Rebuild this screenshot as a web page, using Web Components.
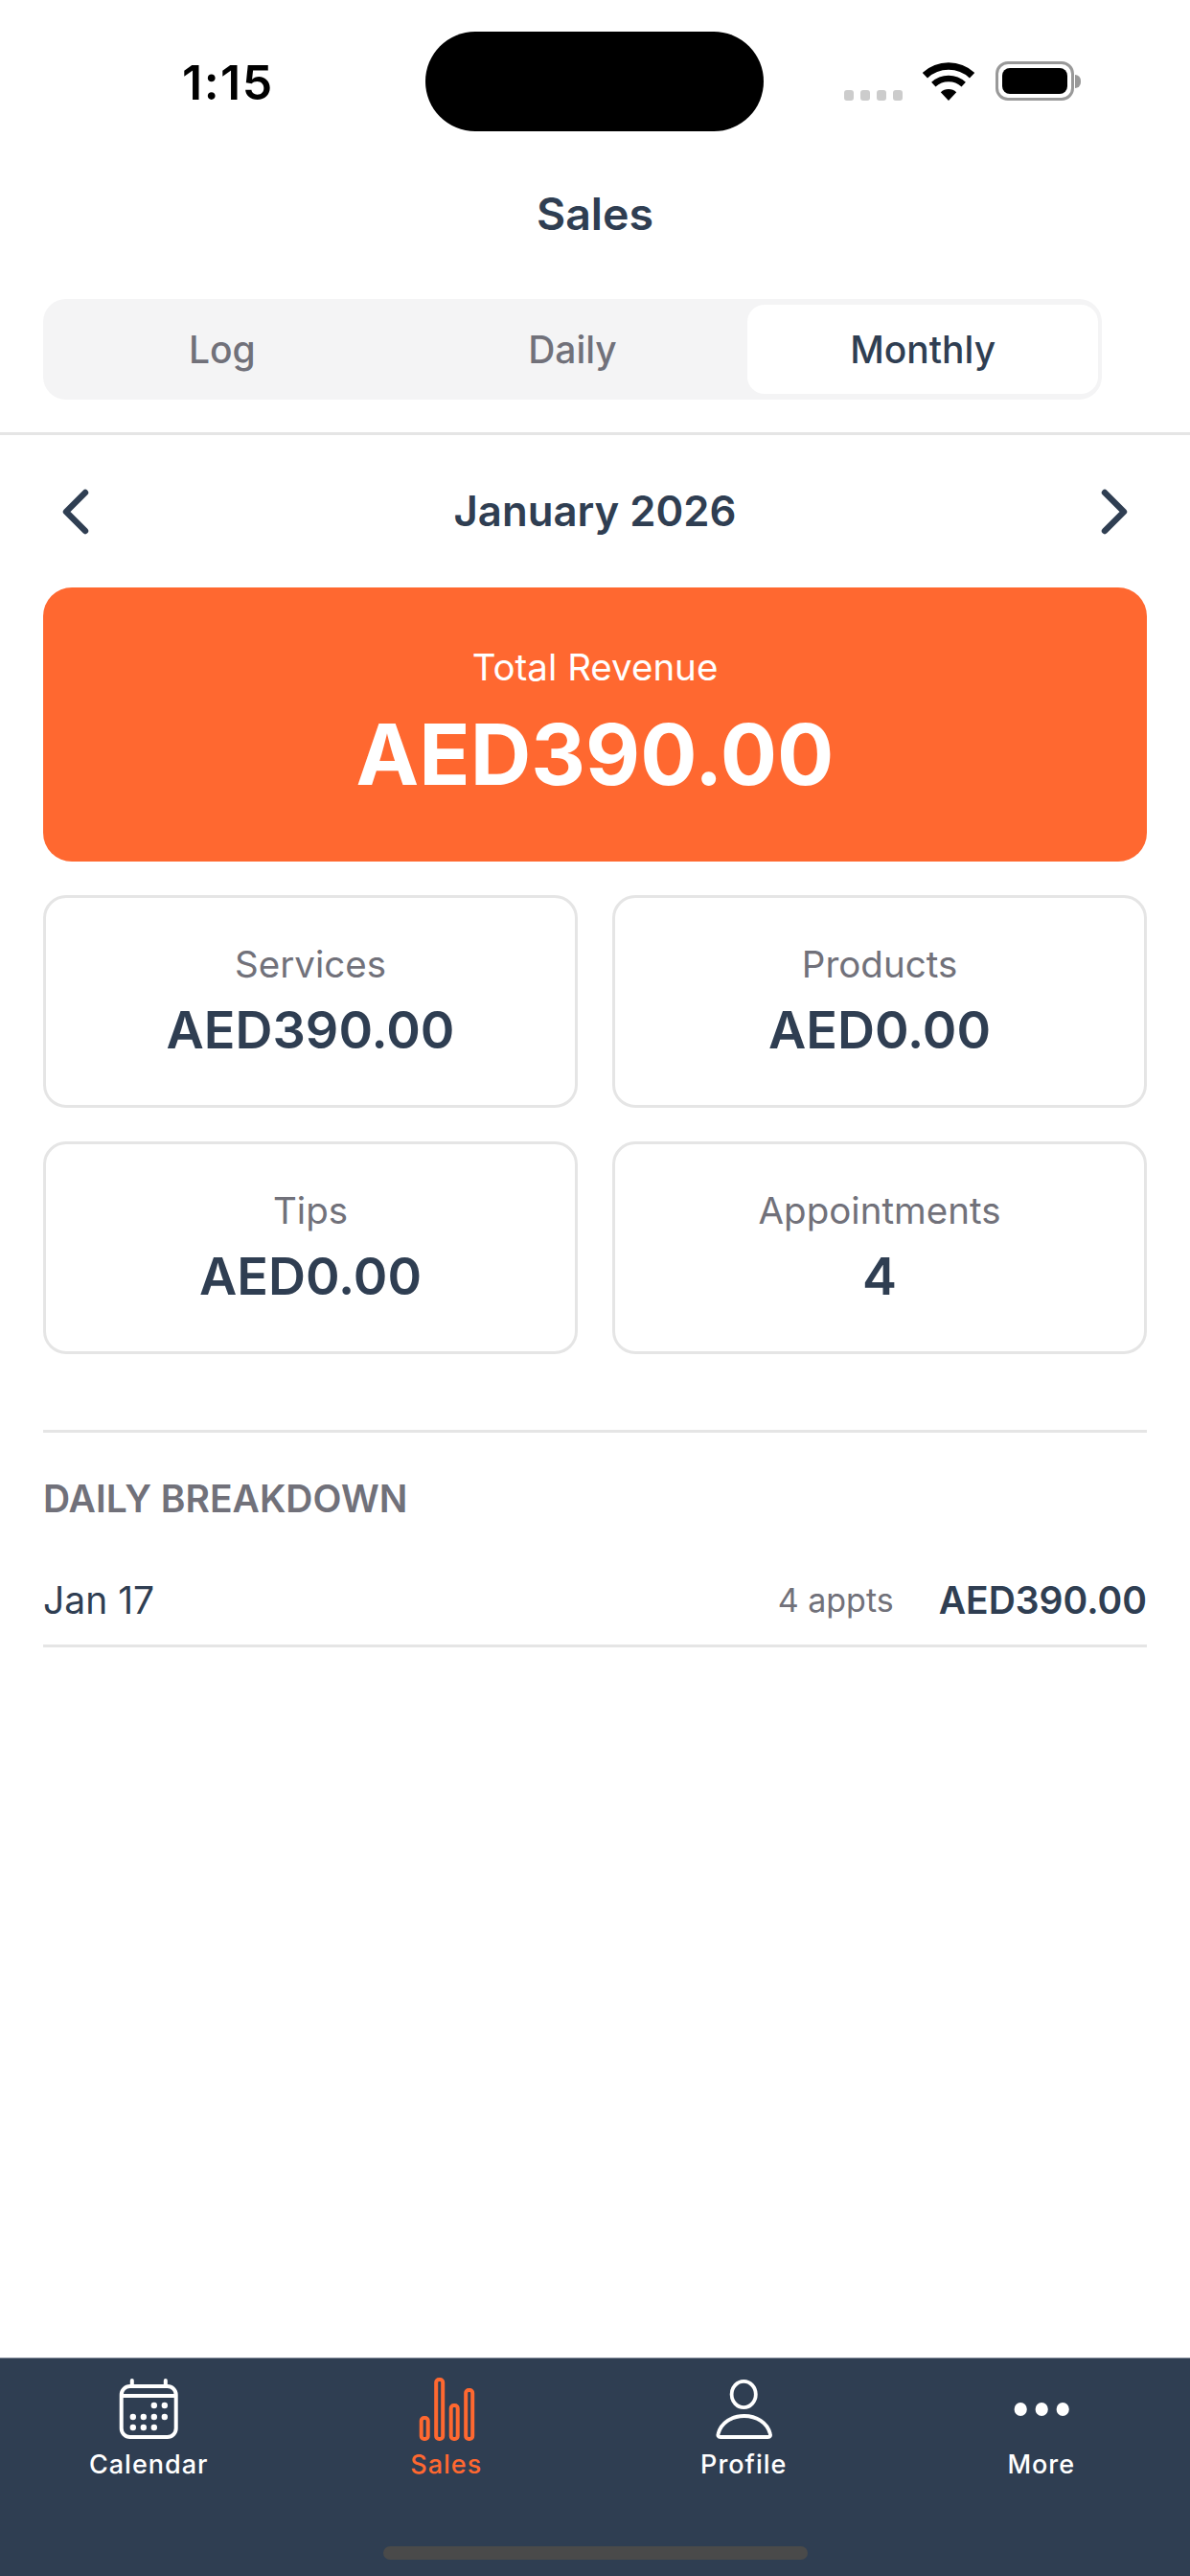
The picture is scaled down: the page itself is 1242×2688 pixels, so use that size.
<!DOCTYPE html>
<html lang="en">
<head>
<meta charset="utf-8">
<title>Sales</title>
<style>
  html, body { margin: 0; padding: 0; background: #fff; }
  body {
    width: 1242px;
    height: 2688px;
    overflow: hidden;
    display: flex;
    flex-direction: column;
    font-family: Inter, "Liberation Sans", sans-serif;
    color: #2f3e52;
  }
</style>
</head>
<body>
  <status-bar time="1:15"></status-bar>
  <sales-header title="Sales">
    <seg-control tabs="Log,Daily,Monthly" active="Monthly"></seg-control>
  </sales-header>
  <month-nav>January 2026</month-nav>
  <sales-summary>
    <revenue-card label="Total Revenue" value="AED390.00"></revenue-card>
    <stat-card label="Services" value="AED390.00"></stat-card>
    <stat-card label="Products" value="AED0.00"></stat-card>
    <stat-card label="Tips" value="AED0.00"></stat-card>
    <stat-card label="Appointments" value="4"></stat-card>
  </sales-summary>
  <daily-breakdown heading="DAILY BREAKDOWN">
    <breakdown-row day="Jan 17" count="4 appts" amount="AED390.00"></breakdown-row>
  </daily-breakdown>
  <tab-bar>
    <tab-item label="Calendar" icon="calendar"></tab-item>
    <tab-item label="Sales" icon="sales" active></tab-item>
    <tab-item label="Profile" icon="profile"></tab-item>
    <tab-item label="More" icon="more"></tab-item>
  </tab-bar>

<script>
const icons = {
  calendar: `<svg width="64" height="66" viewBox="0 0 64 66" fill="none" stroke="currentColor" stroke-width="4">
      <rect x="3.7" y="9" width="57" height="53" rx="9"/>
      <path d="M3.7 19H60.7"/>
      <path d="M14.8 3V9M49.8 3V9" stroke-linecap="round"/>
      <g fill="currentColor" stroke="none">
        <circle cx="37.8" cy="29" r="3.2"/><circle cx="48.8" cy="29" r="3.2"/>
        <circle cx="15.8" cy="41" r="3.2"/><circle cx="26.8" cy="41" r="3.2"/><circle cx="37.8" cy="41" r="3.2"/><circle cx="48.8" cy="41" r="3.2"/>
        <circle cx="15.8" cy="52" r="3.2"/><circle cx="26.8" cy="52" r="3.2"/><circle cx="37.8" cy="52" r="3.2"/>
      </g>
    </svg>`,
  sales: `<svg width="64" height="66" viewBox="0 0 64 66" fill="none" stroke="currentColor" stroke-width="4">
      <rect x="5.7" y="42" width="7" height="22" rx="3"/>
      <rect x="21.2" y="2" width="7" height="62" rx="3"/>
      <rect x="36.7" y="29" width="7" height="35" rx="3"/>
      <rect x="52.2" y="13" width="7" height="51" rx="3"/>
    </svg>`,
  profile: `<svg width="64" height="66" viewBox="0 0 64 66" fill="none" stroke="currentColor" stroke-width="3.8">
      <ellipse cx="32.2" cy="17.5" rx="12.6" ry="13.6"/>
      <path d="M8 62C5.5 62 5 60.6 5.6 58.6C8.6 47 20 40 32.7 40C45.4 40 56.8 47 59.8 58.6C60.4 60.6 59.9 62 57.4 62Z" stroke-linejoin="round"/>
    </svg>`,
  more: `<svg width="64" height="66" viewBox="0 0 64 66" fill="currentColor">
      <ellipse cx="10.2" cy="33" rx="6.6" ry="7"/>
      <ellipse cx="32.2" cy="33" rx="6.6" ry="7"/>
      <ellipse cx="54.2" cy="33" rx="6.6" ry="7"/>
    </svg>`
};

class StatusBar extends HTMLElement {
  connectedCallback() {
    const root = this.attachShadow({ mode: "open" });
    root.innerHTML = `
      <style>
        :host { display: flex; box-sizing: border-box; height: 168px; padding: 33px 114px 0 190px; align-items: flex-start; }
        .time { width: 254px; height: 104px; font: 600 50px/107px Inter, sans-serif; color: #000; letter-spacing: 1.5px; }
        .island { width: 354px; height: 104px; border-radius: 52px; background: #000; }
        .right { flex: 1; display: flex; align-items: flex-end; margin-top: 31px; padding-left: 84px; height: 41px; }
        .dots { display: flex; gap: 7px; }
        .dots i { width: 10px; height: 11px; border-radius: 3px; background: #ccc; }
        .wifi { margin-left: 21px; display: block; }
        .battery { margin-left: 22px; display: flex; align-items: center; }
        .shell { box-sizing: border-box; width: 82px; height: 41px; border: 3px solid #999; border-radius: 13px; padding: 4px; display: flex; }
        .shell b { flex: 1; background: #000; border-radius: 8px; }
        .nub { width: 6px; height: 14px; background: #999; border-radius: 0 7px 7px 0; margin-left: 1px; }
      </style>
      <div class="time">${this.getAttribute("time")}</div>
      <div class="island"></div>
      <div class="right">
        <div class="dots"><i></i><i></i><i></i><i></i></div>
        <svg class="wifi" width="54" height="40" viewBox="0 0 54 40" fill="none" stroke="#000">
          <path d="M2.4 13.7A36 36 0 0 1 51.6 13.7" stroke-width="7.7"/>
          <path d="M11.3 23.2A23 23 0 0 1 42.7 23.2" stroke-width="6.4"/>
          <path d="M27 40L18.8 31.2A12 12 0 0 1 35.2 31.2Z" fill="#000" stroke="none"/>
        </svg>
        <div class="battery"><div class="shell"><b></b></div><div class="nub"></div></div>
      </div>`;
  }
}

class SalesHeader extends HTMLElement {
  connectedCallback() {
    const root = this.attachShadow({ mode: "open" });
    root.innerHTML = `
      <style>
        :host { display: block; box-sizing: border-box; height: 286px; padding: 0 45px 0; border-bottom: 3px solid #e5e5e5; }
        h1 { margin: 0; height: 144px; box-sizing: border-box; padding-top: 24px; font: 600 46.5px/62px Inter, sans-serif; text-align: center; color: #2f3e52; }
        ::slotted(seg-control) { width: 1105px; }
      </style>
      <h1>${this.getAttribute("title")}</h1>
      <slot></slot>`;
  }
}

class SegControl extends HTMLElement {
  connectedCallback() {
    const root = this.attachShadow({ mode: "open" });
    const active = this.getAttribute("active");
    const tabs = this.getAttribute("tabs").split(",").map(t =>
      `<div class="tab${t === active ? " on" : ""}">${t}</div>`).join("");
    root.innerHTML = `
      <style>
        :host { display: block; box-sizing: border-box; height: 105px; background: #f4f4f5; border-radius: 24px; padding: 6px 4px; }
        .row { display: grid; grid-template-columns: repeat(3, 1fr); height: 100%; gap: 0; }
        .tab { display: flex; align-items: center; justify-content: center; font: 500 39px Inter, sans-serif; color: #71717a; border-radius: 18px; }
        .on { background: #fff; color: #2f3e52; }
      </style>
      <div class="row">${tabs}</div>`;
  }
}

class MonthNav extends HTMLElement {
  connectedCallback() {
    const root = this.attachShadow({ mode: "open" });
    root.innerHTML = `
      <style>
        :host { display: flex; align-items: center; justify-content: space-between; box-sizing: border-box; height: 159px; padding: 0 64px; }
        .label { font: 600 43.7px Inter, sans-serif; color: #2f3e52; }
        svg { display: block; }
      </style>
      <svg width="30" height="52" viewBox="0 0 30 52" fill="none" stroke="#2f3e52" stroke-width="6.4" stroke-linecap="round" stroke-linejoin="round"><path d="M25 6L5 26L25 46"/></svg>
      <div class="label"><slot></slot></div>
      <svg width="30" height="52" viewBox="0 0 30 52" fill="none" stroke="#2f3e52" stroke-width="6.4" stroke-linecap="round" stroke-linejoin="round"><path d="M5 6L25 26L5 46"/></svg>`;
  }
}

class SalesSummary extends HTMLElement {
  connectedCallback() {
    const root = this.attachShadow({ mode: "open" });
    root.innerHTML = `
      <style>
        :host { display: grid; grid-template-columns: 558px 558px; grid-auto-rows: auto; gap: 35px 36px; padding: 0 45px; }
        ::slotted(revenue-card) { grid-column: 1 / -1; }
      </style>
      <slot></slot>`;
  }
}

class RevenueCard extends HTMLElement {
  connectedCallback() {
    const root = this.attachShadow({ mode: "open" });
    root.innerHTML = `
      <style>
        :host { display: flex; flex-direction: column; align-items: center; box-sizing: border-box; height: 286px; padding-top: 59px; background: #ff6830; border-radius: 30px; color: #fff; }
        .label { font: 400 38.5px/48px Inter, sans-serif; }
        .value { font: 700 88px/108px Inter, sans-serif; margin-top: 13px; }
      </style>
      <div class="label">${this.getAttribute("label")}</div>
      <div class="value">${this.getAttribute("value")}</div>`;
  }
}

class StatCard extends HTMLElement {
  connectedCallback() {
    const root = this.attachShadow({ mode: "open" });
    root.innerHTML = `
      <style>
        :host { display: flex; flex-direction: column; align-items: center; box-sizing: border-box; height: 222px; padding-top: 45px; background: #fff; border: 3px solid #e5e5e5; border-radius: 24px; }
        .label { font: 400 38.5px/48px Inter, sans-serif; color: #71717a; }
        .value { font: 600 54px/66px Inter, sans-serif; color: #2f3e52; margin-top: 12px; }
      </style>
      <div class="label">${this.getAttribute("label")}</div>
      <div class="value">${this.getAttribute("value")}</div>`;
  }
}

class DailyBreakdown extends HTMLElement {
  connectedCallback() {
    const root = this.attachShadow({ mode: "open" });
    root.innerHTML = `
      <style>
        :host { display: block; flex: 1; margin: 79px 45px 0; border-top: 3px solid #e5e5e5; }
        h2 { margin: 0; padding-top: 47px; font: 600 39px/44px Inter, sans-serif; color: #71717a; }
      </style>
      <h2>${this.getAttribute("heading")}</h2>
      <slot></slot>`;
  }
}

class BreakdownRow extends HTMLElement {
  connectedCallback() {
    const root = this.attachShadow({ mode: "open" });
    root.innerHTML = `
      <style>
        :host { display: flex; align-items: center; box-sizing: border-box; height: 97px; margin-top: 36px; border-bottom: 3px solid #e5e5e5; }
        .day { flex: 1; font: 400 39px Inter, sans-serif; color: #2f3e52; }
        .count { font: 400 34px Inter, sans-serif; color: #71717a; margin-right: 47px; }
        .amount { font: 600 39px Inter, sans-serif; color: #2f3e52; }
      </style>
      <div class="day">${this.getAttribute("day")}</div>
      <div class="count">${this.getAttribute("count")}</div>
      <div class="amount">${this.getAttribute("amount")}</div>`;
  }
}

class TabBar extends HTMLElement {
  connectedCallback() {
    const root = this.attachShadow({ mode: "open" });
    root.innerHTML = `
      <style>
        :host { display: block; position: relative; box-sizing: border-box; height: 228px; padding-top: 20px; background: #2f3e52; border-top: 1px solid #8a93a0; }
        .items { display: grid; grid-template-columns: repeat(4, 1fr); }
        .home { position: absolute; left: 400px; top: 196px; width: 443px; height: 14px; border-radius: 7px; background: #4a4a4a; }
      </style>
      <div class="items"><slot></slot></div>
      <div class="home"></div>`;
  }
}

class TabItem extends HTMLElement {
  connectedCallback() {
    const root = this.attachShadow({ mode: "open" });
    root.innerHTML = `
      <style>
        :host { display: flex; flex-direction: column; align-items: center; color: #fff; }
        :host([active]) { color: #ff6830; }
        svg { display: block; }
        .label { font: 450 27px/34px Inter, sans-serif; letter-spacing: 1px; margin-top: 8px; }
      </style>
      ${icons[this.getAttribute("icon")]}
      <div class="label">${this.getAttribute("label")}</div>`;
  }
}

customElements.define("status-bar", StatusBar);
customElements.define("sales-header", SalesHeader);
customElements.define("seg-control", SegControl);
customElements.define("month-nav", MonthNav);
customElements.define("sales-summary", SalesSummary);
customElements.define("revenue-card", RevenueCard);
customElements.define("stat-card", StatCard);
customElements.define("daily-breakdown", DailyBreakdown);
customElements.define("breakdown-row", BreakdownRow);
customElements.define("tab-bar", TabBar);
customElements.define("tab-item", TabItem);
</script>
</body>
</html>
